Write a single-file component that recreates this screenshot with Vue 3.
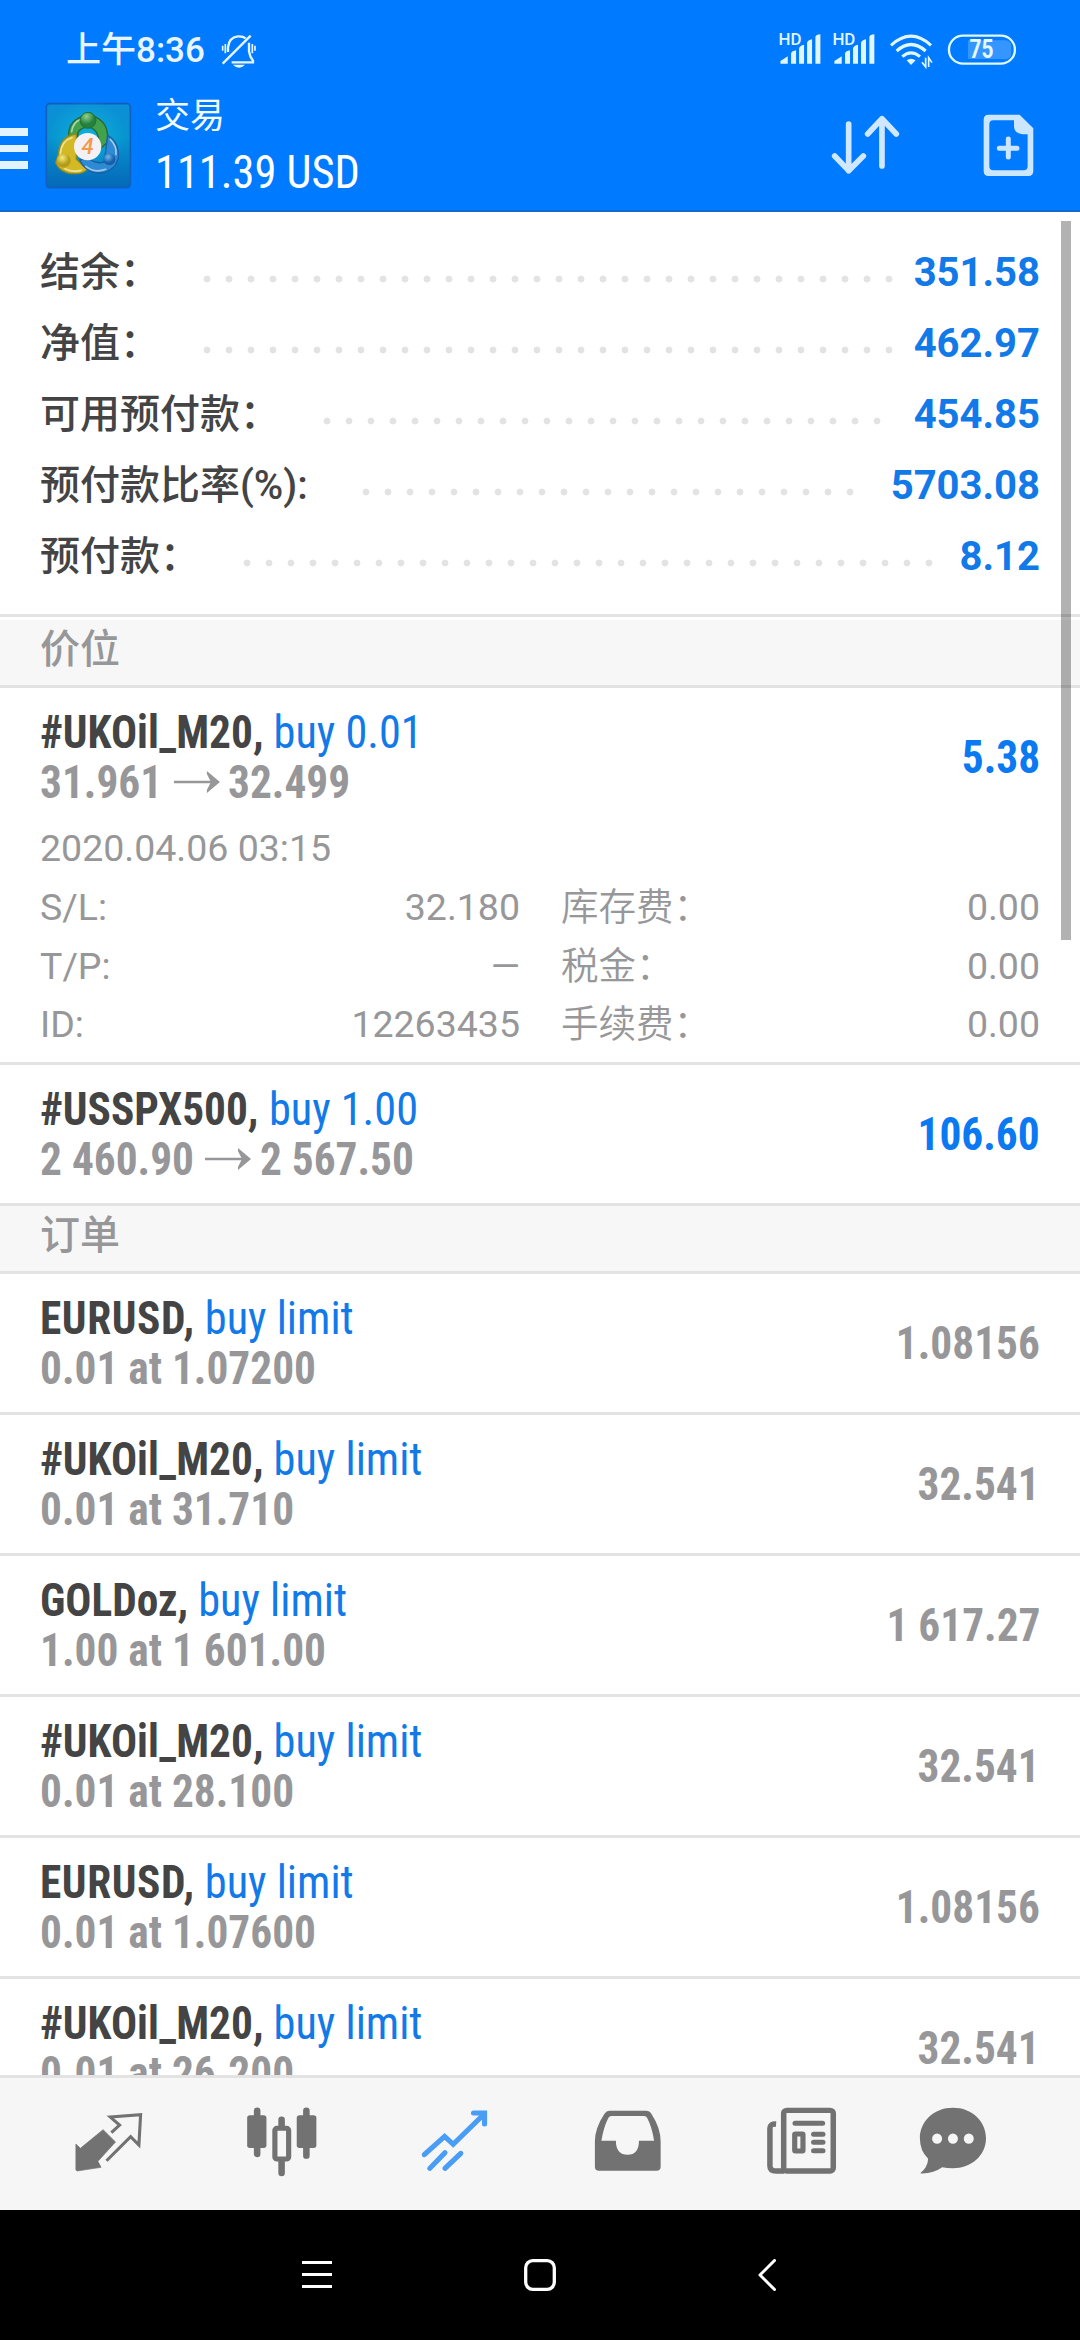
<script setup>
const summary = [
  { label: '结余：', value: '351.58', dots: 32 },
  { label: '净值：', value: '462.97', dots: 32 },
  { label: '可用预付款：', value: '454.85', dots: 26 },
  { label: '预付款比率(%):', value: '5703.08', dots: 23, mixed: true },
  { label: '预付款：', value: '8.12', dots: 32 },
]

const positions = [
  {
    symbol: '#UKOil_M20,', side: 'buy 0.01', from: '31.961', to: '32.499', profit: '5.38',
    details: {
      time: '2020.04.06 03:15',
      left: [['S/L:', '32.180'], ['T/P:', '—'], ['ID:', '12263435']],
      right: [['库存费：', '0.00'], ['税金：', '0.00'], ['手续费：', '0.00']],
    },
  },
  { symbol: '#USSPX500,', side: 'buy 1.00', from: '2 460.90', to: '2 567.50', profit: '106.60' },
]

const orders = [
  { symbol: 'EURUSD,', price: '0.01 at 1.07200', quote: '1.08156', caps: true },
  { symbol: '#UKOil_M20,', price: '0.01 at 31.710', quote: '32.541' },
  { symbol: 'GOLDoz,', price: '1.00 at 1 601.00', quote: '1 617.27' },
  { symbol: '#UKOil_M20,', price: '0.01 at 28.100', quote: '32.541' },
  { symbol: 'EURUSD,', price: '0.01 at 1.07600', quote: '1.08156', caps: true },
  { symbol: '#UKOil_M20,', price: '0.01 at 26.200', quote: '32.541' },
]
</script>

<template>
  <div class="screen">
    <header class="top">
      <div class="status">
        <span class="clock">上午8:36</span>
        <svg class="bell" viewBox="664 98 108 102" width="36" height="34">
          <g fill="none" stroke="#e8f5ff" stroke-width="7">
            <path d="M685 152V138Q688 108 714 105Q730 104 738 111M748 124V150Q750 165 760 178V183H696" />
            <path d="M669 187L753 103" />
            <path d="M669 133V148M677 128V156M766 133V148M758 128V156" stroke-width="5" />
          </g>
          <path d="M700 190H736Q728 199 718 199Q708 199 700 190Z" fill="#e8f5ff" />
        </svg>
        <svg class="radio" viewBox="114 73 720 133" width="240" height="44.300">
          <g v-for="x in [0, 162]" :key="x" :transform="`translate(${x} 0)`" fill="#e0f5ff">
            <text x="115" y="132" class="hd" textLength="69" lengthAdjust="spacingAndGlyphs">HD</text>
            <path d="M121 189V181L143 167V189ZM153 189V158Q155 151 168 149V189ZM177 189V143Q178 135 192 132V189ZM201 189V126Q203 119 216 116V189ZM226 189V108Q228 102 241 101V189Z" />
          </g>
          <g fill="none" stroke="#e0f7ff" stroke-width="9.500">
            <path d="M453 134Q513 79 573 134" />
            <path d="M470 151Q513 112 557 151" />
            <path d="M487 168Q513 145 540 168" />
          </g>
          <path d="M500 179Q513 169 527 179L513 193Z" fill="#e0f7ff" />
          <path d="M557 171V199L546 185M566 199V171L576 186" fill="none" stroke="#e0f7ff" stroke-width="5" />
          <rect x="684" y="119" width="130" height="56" rx="16" fill="#3596ff" />
          <rect x="684" y="119" width="40" height="56" fill="#3596ff" />
          <rect x="627" y="105" width="198" height="84" rx="42" fill="none" stroke="#e0f8ff" stroke-width="7" />
          <text x="689" y="173" class="charge" textLength="72" lengthAdjust="spacingAndGlyphs">75</text>
        </svg>
      </div>
      <div class="appbar">
        <div class="burger"><i></i><i></i><i></i></div>
        <svg class="logo" viewBox="134 308 261 261" width="87" height="87">
          <defs>
            <linearGradient id="tile" x1="0" y1="0" x2="0" y2="1">
              <stop offset="0" stop-color="#0c8fd8" /><stop offset=".4" stop-color="#0794cf" /><stop offset="1" stop-color="#0568b8" />
            </linearGradient>
            <radialGradient id="glow"><stop offset="0" stop-color="#13bfe0" /><stop offset="1" stop-color="#13bfe0" stop-opacity="0" /></radialGradient>
            <radialGradient id="green" cx=".4" cy=".25"><stop offset="0" stop-color="#8fd28b" /><stop offset="1" stop-color="#25803d" /></radialGradient>
            <radialGradient id="gold" cx=".4" cy=".3"><stop offset="0" stop-color="#f7ec78" /><stop offset="1" stop-color="#b49a18" /></radialGradient>
            <radialGradient id="blue" cx=".4" cy=".3"><stop offset="0" stop-color="#6fb9ee" /><stop offset="1" stop-color="#155faa" /></radialGradient>
          </defs>
          <rect x="138" y="313" width="252" height="252" rx="10" fill="url(#tile)" stroke="#1260bd" stroke-width="5" />
          <circle cx="262" cy="415" r="115" fill="url(#glow)" opacity=".7" />
          <path d="M262 468L206 420Q198 370 245 351L282 351Q330 372 320 430L292 455Q306 392 262 382Q228 390 232 412Z" fill="#43a04b" stroke="#236b38" stroke-width="4" />
          <path d="M228 404Q178 410 174 466L166 490Q182 525 228 523Q250 522 260 510L228 480Z" fill="#d3ba24" stroke="#8d8a22" stroke-width="4" />
          <path d="M322 408Q358 430 354 477L345 498Q318 528 278 519Q252 510 238 482L262 474Q285 496 312 488Z" fill="#2f8ad4" stroke="#185fa5" stroke-width="4" />
          <path d="M214 397Q218 368 240 361M180 463Q184 424 215 415M330 420Q350 440 347 465M256 501Q282 522 316 510M194 508Q216 520 242 513" fill="none" stroke="#fff" stroke-opacity=".55" stroke-width="5" stroke-linecap="round" />
          <circle cx="263" cy="363" r="24" fill="url(#green)" stroke="#1f7035" stroke-width="3" />
          <circle cx="190" cy="484" r="21" fill="url(#gold)" />
          <circle cx="327" cy="480" r="18" fill="url(#blue)" />
          <circle cx="262" cy="442" r="41" fill="#f3f1f4" />
          <text x="262" y="465" text-anchor="middle" class="four">4</text>
        </svg>
        <div class="titles">
          <div class="screen-name">交易</div>
          <div class="total cond">111.39 USD</div>
        </div>
        <svg class="sort" viewBox="272 346 208 180" width="69.3" height="60">
          <path d="M325 373V513M283 469L325 513L369 469M425 499V359M382 403L425 357L468 403" fill="none" stroke="#cfe8ff" stroke-width="17" stroke-linecap="round" stroke-linejoin="round" />
        </svg>
        <svg class="new-order" viewBox="728 344 154 188" width="51.3" height="62.7">
          <path fill="#cbe6ff" fill-rule="evenodd" d="M745 346H838L879 387V515Q879 530 864 530H745Q730 530 730 515V361Q730 346 745 346ZM759 363Q747 363 747 375V500Q747 513 759 513H850Q862 513 862 500V405H846Q821 402 821 379V363Z" />
          <path d="M777 447H830M804 419V473" fill="none" stroke="#cbe6ff" stroke-width="15" stroke-linecap="round" />
        </svg>
      </div>
    </header>

    <main class="list">
      <section class="summary">
        <div v-for="row in summary" :key="row.label" class="sum-row">
          <span class="sum-label" :class="{ mixed: row.mixed }">{{ row.label }}</span>
          <span class="dots" :style="{ width: row.dots * 22 + 'px' }"></span>
          <b class="sum-value">{{ row.value }}</b>
        </div>
      </section>

      <h2 class="group first">价位</h2>
      <article v-for="p in positions" :key="p.symbol" class="item">
        <div class="item-main cond">
          <div>
            <div class="line"><b>{{ p.symbol }}</b> <span class="side">{{ p.side }}</span></div>
            <div class="line sub">
              <span>{{ p.from }}</span>
              <svg class="arrow" viewBox="0 0 46 22" width="49" height="22" preserveAspectRatio="none">
                <path d="M0 11H38" stroke="#979799" stroke-width="2.6" />
                <path d="M33 0L46 11L33 22V19L37 11L33 3Z" fill="#979799" />
              </svg>
              <span>{{ p.to }}</span>
            </div>
          </div>
          <b class="profit">{{ p.profit }}</b>
        </div>
        <div v-if="p.details" class="details">
          <div class="time">{{ p.details.time }}</div>
          <div class="columns">
            <dl v-for="(col, i) in [p.details.left, p.details.right]" :key="i">
              <div v-for="[name, val] in col" :key="name" class="pair"><dt>{{ name }}</dt><dd>{{ val }}</dd></div>
            </dl>
          </div>
        </div>
      </article>

      <h2 class="group">订单</h2>
      <article v-for="(o, i) in orders" :key="i" class="item">
        <div class="item-main cond">
          <div>
            <div class="line"><b :class="{ caps: o.caps }">{{ o.symbol }}</b> <span class="side">buy limit</span></div>
            <div class="line sub">{{ o.price }}</div>
          </div>
          <b class="quote">{{ o.quote }}</b>
        </div>
      </article>
      <div class="scrollbar"></div>
    </main>

    <nav class="tabs">
      <svg viewBox="199 430 230 230" preserveAspectRatio="none">
        <path d="M298 510L334 547L283 605L292 623L222 634L219 630V553L232 566Z" fill="#727272" stroke="#727272" stroke-width="2" stroke-linejoin="round" />
        <path d="M322 519L346 496L319 472L407 465L402 556L378 531L308 603" fill="none" stroke="#727272" stroke-width="9" />
      </svg>
      <svg viewBox="701 430 230 230" preserveAspectRatio="none">
        <path d="M745 453V583M888 453V588M816 480V500M816 606V640" stroke="#727272" stroke-width="19" stroke-linecap="round" />
        <rect x="716" y="467" width="56" height="98" rx="8" fill="#727272" />
        <rect x="860" y="467" width="57" height="98" rx="8" fill="#727272" />
        <rect x="796.500" y="506" width="40" height="92" rx="6" fill="#f6f6f6" stroke="#727272" stroke-width="15" />
      </svg>
      <svg viewBox="1203 430 230 230" preserveAspectRatio="none">
        <path d="M1230 585L1289 530L1314 554L1404 463M1373 460H1405V493M1246 626L1290 579M1290 626L1336 581" fill="none" stroke="#4a9df5" stroke-width="15" stroke-linecap="round" stroke-linejoin="miter" />
      </svg>
      <svg viewBox="139 430 230 230" preserveAspectRatio="none">
        <path fill="#727272" fill-rule="evenodd" d="M201 453H308Q318 453 323 462Q350 505 350 545V621Q350 633 338 633H171Q159 633 159 621V545Q159 505 187 462Q192 453 201 453ZM207 469Q201 469 198 475Q184 503 178 543H220Q220 585 254 585Q287 585 287 543H331Q325 503 311 475Q308 469 302 469Z" />
      </svg>
      <svg viewBox="643 430 230 230" preserveAspectRatio="none">
        <path d="M684 493Q666 492 666 506V618Q666 634 684 634H708" fill="none" stroke="#727272" stroke-width="16" />
        <rect x="706" y="452" width="144" height="182" rx="9" fill="none" stroke="#727272" stroke-width="16" />
        <path d="M739 491H819M793 524H820M793 548H820M793 573H820" stroke="#727272" stroke-width="15" stroke-linecap="round" />
        <rect x="738" y="523" width="24" height="51" rx="2" fill="none" stroke="#727272" stroke-width="15" />
      </svg>
      <svg viewBox="1083 430 230 230" preserveAspectRatio="none">
        <path d="M1199 444C1255 444 1295 485 1295 536C1295 588 1252 626 1199 626Q1182 626 1168 623Q1141 643 1104 641Q1126 622 1127 597Q1103 574 1103 536C1103 485 1143 444 1199 444Z" fill="#727272" />
        <ellipse v-for="x in [1153, 1199, 1245]" :key="x" :cx="x" cy="537" rx="14.500" ry="15.500" fill="#f6f6f6" />
      </svg>
    </nav>

    <footer class="system">
      <svg class="sys-menu" viewBox="0 0 30 28" width="30" height="28"><path d="M0 1.500H30M0 13.500H30M0 25.500H30" stroke="#fff" stroke-width="3" /></svg>
      <svg class="sys-home" viewBox="0 0 32 32" width="32" height="32"><rect x="1.700" y="1.700" width="28.600" height="28.600" rx="7" fill="none" stroke="#fff" stroke-width="3.300" /></svg>
      <svg class="sys-back" viewBox="0 0 18 32" width="18" height="32"><path d="M16.500 1.500L2 16L16.500 30.500" fill="none" stroke="#fff" stroke-width="3" stroke-linecap="round" stroke-linejoin="round" /></svg>
    </footer>
  </div>
</template>

<style>
body { margin: 0; }
</style>

<style scoped>
.screen {
  width: 1080px;
  height: 2340px;
  display: flex;
  flex-direction: column;
  overflow: hidden;
  background: #fff;
  font-family: Roboto, "Noto Sans CJK SC", sans-serif;
}
svg { display: block; flex: none; }
.cond { font-family: "Roboto Condensed", Roboto, "Noto Sans CJK SC", sans-serif; font-stretch: 75%; }

.top { height: 210px; flex: none; background: #007aff; border-bottom: 2px solid #1169d0; }
.status { height: 98px; display: flex; align-items: flex-start; }
.clock { margin-left: 66px; width: 139px; padding-top: 27px; font-size: 35px; line-height: 48px; font-weight: 500; color: #e8f5ff; white-space: nowrap; }
.bell { margin: 34px 0 0 16px; }
.radio { margin: 24.500px 0 0 auto; padding-right: 62px; }
.hd { font-size: 48px; font-weight: 500; }
.charge { font-size: 76px; font-weight: 700; fill: #e6faff; }
.four { font-size: 66px; font-weight: 500; fill: #f29a4a; font-style: italic; }
.appbar { height: 112px; display: flex; align-items: flex-start; }
.burger { width: 28px; padding-top: 30px; display: flex; flex-direction: column; gap: 9px; }
.burger i { height: 7.500px; background: #e3f3ff; }
.logo { margin: 4px 0 0 17px; }
.titles { margin-left: 23px; color: #f3fbff; white-space: nowrap; }
.screen-name { font-size: 35px; line-height: 38px; }
.total { font-size: 46px; line-height: 56px; color: #fff; margin-top: 8px; transform: scaleX(.966); transform-origin: left; }
.sort { margin: 17px 0 0 auto; }
.new-order { margin: 16px 46px 0 82px; }

.list { position: relative; height: 1863px; flex: none; overflow: hidden; }
.summary { height: 377px; padding: 25px 40px 0; }
.sum-row { height: 71px; line-height: 71px; display: flex; align-items: center; font-size: 40px; color: #444; white-space: nowrap; }
.sum-label { font-weight: 500; }
.sum-label.mixed { padding-right: 12px; }
.dots { height: 8px; margin: 13px 0 0 35.500px; background: radial-gradient(circle at 11px 4px, #e3e3e3 3px, transparent 3.800px) 0 0 / 22px 8px; }
.sum-value { margin-left: auto; color: #1279e8; }

.group { margin: 0; height: 65px; border-bottom: 3px solid #e3e3e3; background: #f7f7f7; padding-left: 40px; font-size: 40px; line-height: 59px; font-weight: 500; color: #979799; }
.group.first { border-top: 3px solid #e3e3e3; box-shadow: inset 0 3px #fff; height: 68px; line-height: 65px; }

.item { border-bottom: 3px solid #e3e3e3; padding: 0 40px; color: #444; }
.item-main { height: 138px; display: flex; align-items: center; justify-content: space-between; font-size: 46px; }
.line { height: 50px; line-height: 50px; white-space: pre; transform: scaleX(.942); transform-origin: left; }
.caps { letter-spacing: .6px; }
.side { display: inline-block; transform: scaleX(1.022); transform-origin: left; color: #1279e8; }
.sub { color: #979799; font-weight: 700; display: flex; }
.arrow { margin: 14px 9px 0 12px; }
.profit, .quote { transform: scaleX(.942); transform-origin: right; }
.profit { color: #0a79f2; }
.quote { color: #979799; }

.details { height: 236px; color: #979799; font-size: 37.500px; }
.time { line-height: 44px; margin-bottom: 8px; }
.columns { display: grid; grid-template-columns: 480px 479px; column-gap: 41px; }
dl, dd { margin: 0; }
.pair { display: flex; justify-content: space-between; line-height: 58.500px; height: 58.500px; }
.columns dl:last-child dt { font-weight: 350; }

.scrollbar { position: absolute; top: 9px; right: 9px; width: 10px; height: 719px; background: rgba(0, 0, 0, .3); }

.tabs { height: 132px; flex: none; border-top: 3px solid #e3e3e3; background: #f6f6f6; display: grid; grid-template-columns: repeat(5, 173.300px) 129px; padding-left: 21.500px; justify-items: center; }
.tabs svg { width: 79.200px; height: 76.700px; margin-top: 25.300px; }

.system { flex: 1; background: #000; display: flex; align-items: flex-start; }
.sys-menu { margin: 51px 0 0 302px; }
.sys-home { margin: 49px 0 0 192px; }
.sys-back { margin: 49px 0 0 202px; }
</style>
